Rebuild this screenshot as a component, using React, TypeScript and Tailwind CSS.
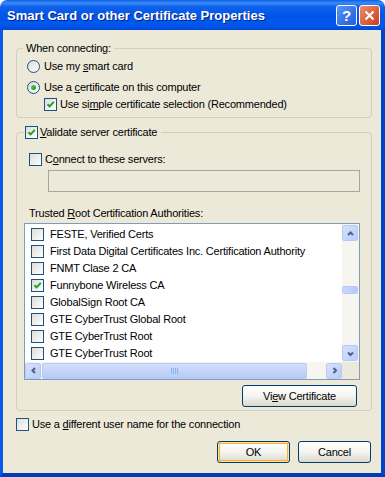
import React from "react";

const CERTS: { name: string; checked?: boolean }[] = [
  { name: "FESTE, Verified Certs" },
  { name: "First Data Digital Certificates Inc. Certification Authority" },
  { name: "FNMT Clase 2 CA" },
  { name: "Funnybone Wireless CA", checked: true },
  { name: "GlobalSign Root CA" },
  { name: "GTE CyberTrust Global Root" },
  { name: "GTE CyberTrust Root" },
  { name: "GTE CyberTrust Root" },
];

function CheckBox({ checked }: { checked?: boolean }) {
  return (
    <span className="flex h-[13px] w-[13px] shrink-0 items-center justify-center border border-[#1C5180] bg-gradient-to-br from-[#DCDCD7] to-white">
      {checked ? (
        <svg width="9" height="9" viewBox="0 0 9 9">
          <path d="M1.5 4.2 L3.6 6.4 L7.8 1.8" stroke="#21A121" strokeWidth="2" fill="none" />
        </svg>
      ) : null}
    </span>
  );
}

function Radio({ checked }: { checked?: boolean }) {
  return (
    <span className="flex h-[13px] w-[13px] shrink-0 items-center justify-center rounded-full border border-[#1C5180] bg-gradient-to-br from-[#DCDCD7] to-white">
      {checked ? <span className="h-[5px] w-[5px] rounded-full bg-gradient-to-br from-[#55D551] to-[#1E8C1E]" /> : null}
    </span>
  );
}

function Arrow({ dir }: { dir: "up" | "down" | "left" | "right" }) {
  const d = {
    up: "M2 6 L4.5 3.5 L7 6",
    down: "M2 3.5 L4.5 6 L7 3.5",
    left: "M6 2 L3.5 4.5 L6 7",
    right: "M3.5 2 L6 4.5 L3.5 7",
  }[dir];
  return (
    <svg width="9" height="9" viewBox="0 0 9 9">
      <path d={d} stroke="#4D6185" strokeWidth="2" fill="none" />
    </svg>
  );
}

function ScrollBtn({ dir }: { dir: "up" | "down" | "left" | "right" }) {
  return (
    <span className="flex h-[16px] w-[16px] shrink-0 items-center justify-center rounded-[2px] border border-[#B7CAF5] bg-gradient-to-br from-[#D6E2FD] to-[#B9CCF8]">
      <Arrow dir={dir} />
    </span>
  );
}

function XpButton({ children, def, className }: { children: React.ReactNode; def?: boolean; className: string }) {
  return (
    <button
      className={
        "flex h-[22px] items-center justify-center rounded-[3px] border border-[#003C74] bg-gradient-to-b from-white via-[#F5F4EF] to-[#DCD8CC] " +
        (def ? "shadow-[inset_0_0_0_1px_#FFE29B,inset_0_0_0_2px_#F8B330] " : "") +
        className
      }
    >
      {children}
    </button>
  );
}

export default function App() {
  return (
    <div className="flex h-[477px] w-[385px] flex-col overflow-hidden bg-white font-['Liberation_Sans',Arial,sans-serif] text-[11px] leading-[13px] tracking-[-0.2px] text-black">
      {/* title bar */}
      <div className="flex h-[30px] shrink-0 items-center rounded-t-[7px] bg-[linear-gradient(to_bottom,#0A5FE8_0%,#3D8BF8_10%,#0F62EC_22%,#0055E8_55%,#0058EE_85%,#0046D6_100%)] pl-[7px] pr-[5px]">
        <span className="flex-1 pt-[1px] text-[13px] font-bold leading-[16px] tracking-normal text-white [text-shadow:1px_1px_0_#0A1E80]">
          Smart Card or other Certificate Properties
        </span>
        <span className="mr-[2px] flex h-[21px] w-[21px] items-center justify-center rounded-[3px] border border-white bg-gradient-to-br from-[#5B93F8] to-[#1F5CDA] text-[15px] font-bold text-white">
          ?
        </span>
        <span className="flex h-[21px] w-[21px] items-center justify-center rounded-[3px] border border-white bg-gradient-to-br from-[#EE8B6A] to-[#C93A18]">
          <svg width="11" height="11" viewBox="0 0 11 11">
            <path d="M1.5 1.5 L9.5 9.5 M9.5 1.5 L1.5 9.5" stroke="white" strokeWidth="2" />
          </svg>
        </span>
      </div>

      {/* client area */}
      <div className="flex flex-1 flex-col border-b-[4px] border-l-[3px] border-r-[4px] border-b-[#003BB8] border-l-[#0A58E6] border-r-[#0044CC] bg-[#ECE9D8]">
        <div className="relative ml-[13px] mt-[18px] h-[70px] w-[356px] rounded-[4px] border border-[#D0D0BF]">
          <span className="absolute -top-[7px] left-[6px] bg-[#ECE9D8] px-[3px]">When connecting:</span>
          <div className="flex flex-col pl-[10px] pt-[9px]">
            <div className="flex h-[17px] items-center gap-[4px]">
              <Radio />
              <span>
                Use my <u>s</u>mart card
              </span>
            </div>
            <div className="mt-[4px] flex h-[17px] items-center gap-[4px]">
              <Radio checked />
              <span>
                Use a <u>c</u>ertificate on this computer
              </span>
            </div>
            <div className="ml-[17px] flex h-[17px] items-center gap-[3px]">
              <CheckBox checked />
              <span>
                Use si<u>m</u>ple certificate selection (Recommended)
              </span>
            </div>
          </div>
        </div>

        <div className="relative ml-[13px] mt-[14px] h-[279px] w-[356px] rounded-[4px] border border-[#D0D0BF]">
          <div className="absolute -top-[9px] left-[7px] flex h-[17px] items-center gap-[2px] bg-[#ECE9D8] px-[1px] pr-[4px]">
            <CheckBox checked />
            <span>
              <u>V</u>alidate server certificate
            </span>
          </div>
          <div className="flex flex-col pt-[18px]">
            <div className="ml-[12px] flex h-[17px] items-center gap-[3px]">
              <CheckBox />
              <span>
                C<u>o</u>nnect to these servers:
              </span>
            </div>
            <div className="ml-[31px] mt-[2px] h-[22px] w-[312px] border border-[#A5A5A0] bg-[#ECE9D8]" />
            <div className="ml-[12px] mt-[15px] h-[13px]">
              Trusted <u>R</u>oot Certification Authorities:
            </div>
            <div className="ml-[7px] mt-[3px] flex h-[157px] w-[336px] flex-col border border-[#7F9DB9] bg-white">
              <div className="flex h-[138px]">
                <div className="flex flex-1 flex-col overflow-hidden pl-[6px] pt-[2px]">
                  {CERTS.map((c, i) => (
                    <div key={i} className="flex h-[17px] shrink-0 items-center gap-[6px] whitespace-nowrap">
                      <CheckBox checked={c.checked} />
                      <span>{c.name}</span>
                    </div>
                  ))}
                </div>
                <div className="flex w-[17px] flex-col bg-[#F6F5EF] p-[1px] pl-0">
                  <ScrollBtn dir="up" />
                  <div className="relative flex-1">
                    <span className="absolute left-0 top-[45px] h-[8px] w-[16px] rounded-[2px] border border-[#B7CAF5] bg-gradient-to-r from-[#C9D8FC] to-[#B5C8F7]" />
                  </div>
                  <ScrollBtn dir="down" />
                </div>
              </div>
              <div className="flex h-[17px]">
                <div className="flex flex-1 items-center bg-[#F6F5EF] py-[1px]">
                  <ScrollBtn dir="left" />
                  <span className="ml-[1px] flex h-[16px] w-[265px] items-center justify-center rounded-[2px] border border-[#B7CAF5] bg-gradient-to-b from-[#D2DFFD] to-[#B7CAF7]">
                    <span className="flex gap-[1px]">
                      <span className="h-[6px] w-[1px] bg-[#8CB0F8]" />
                      <span className="h-[6px] w-[1px] bg-[#8CB0F8]" />
                      <span className="h-[6px] w-[1px] bg-[#8CB0F8]" />
                      <span className="h-[6px] w-[1px] bg-[#8CB0F8]" />
                    </span>
                  </span>
                  <span className="flex-1" />
                  <ScrollBtn dir="right" />
                </div>
                <div className="w-[17px] bg-[#ECE9D8]" />
              </div>
            </div>
            <XpButton className="ml-[225px] mt-[5px] w-[115px]">
              Vi<u>e</u>w Certificate
            </XpButton>
          </div>
        </div>

        <div className="ml-[13px] mt-[5px] flex h-[17px] items-center gap-[3px]">
          <CheckBox />
          <span>
            Use a <u>d</u>ifferent user name for the connection
          </span>
        </div>

        <div className="mt-[8px] flex justify-end gap-[8px] pr-[10px]">
          <XpButton def className="w-[73px]">
            OK
          </XpButton>
          <XpButton className="w-[73px]">Cancel</XpButton>
        </div>
      </div>
    </div>
  );
}
